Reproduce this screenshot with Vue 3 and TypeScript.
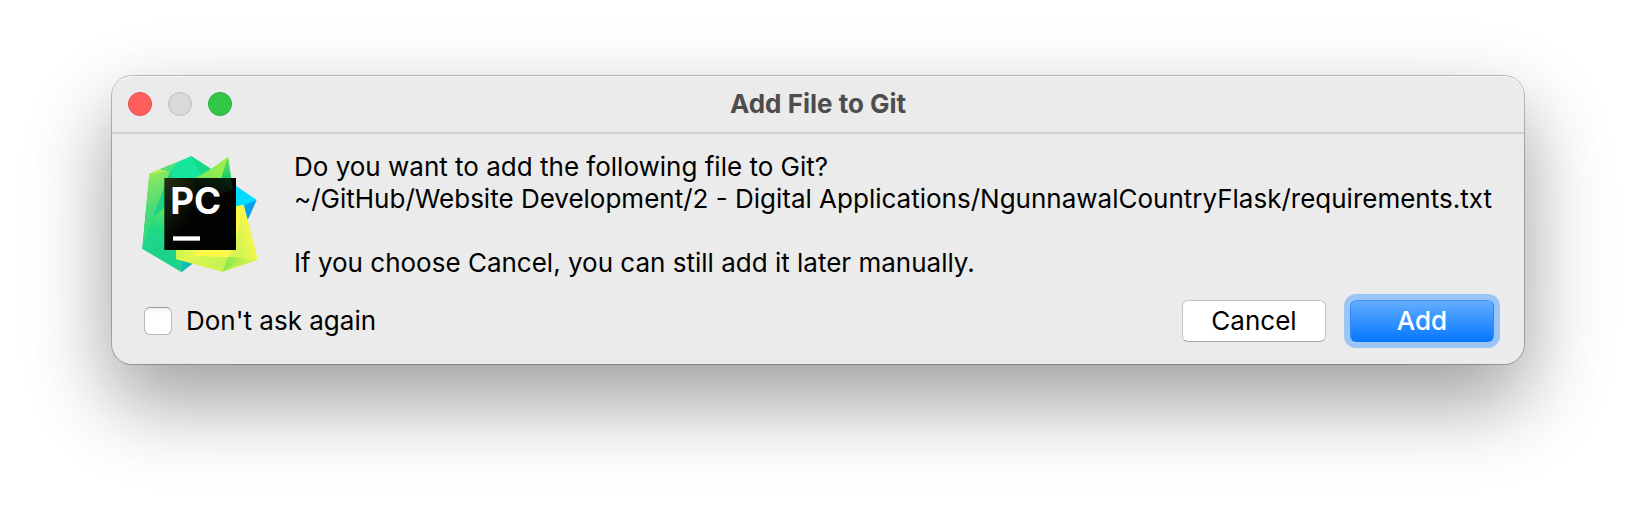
<script setup lang="ts">
import { ref } from 'vue'

const dontAsk = ref<boolean>(false)
const filePath = '~/GitHub/Website Development/2 - Digital Applications/NgunnawalCountryFlask/requirements.txt'
</script>

<template>
  <main class="desktop">
    <section class="dialog" role="dialog" aria-labelledby="dialog-title">
      <header class="titlebar">
        <div class="lights">
          <button class="light close" type="button" aria-label="Close"></button>
          <button class="light minimise" type="button" aria-label="Minimise" disabled></button>
          <button class="light zoom" type="button" aria-label="Zoom"></button>
        </div>
        <h1 id="dialog-title" class="title">Add File to Git</h1>
      </header>

      <div class="content">
        <svg class="logo" viewBox="36 30 351 351" aria-hidden="true">
          <defs>
            <linearGradient id="leaf" x1="60" y1="90" x2="220" y2="320" gradientUnits="userSpaceOnUse">
              <stop offset="0" stop-color="#5fdc63" />
              <stop offset="0.35" stop-color="#25d97b" />
              <stop offset="1" stop-color="#20d78c" />
            </linearGradient>
            <linearGradient id="side" x1="60" y1="90" x2="100" y2="190" gradientUnits="userSpaceOnUse">
              <stop offset="0" stop-color="#8fe960" />
              <stop offset="1" stop-color="#35d77c" />
            </linearGradient>
            <linearGradient id="edge" x1="60" y1="86" x2="45" y2="311" gradientUnits="userSpaceOnUse">
              <stop offset="0" stop-color="#86e764" />
              <stop offset="1" stop-color="#2fd886" />
            </linearGradient>
            <linearGradient id="flap" x1="103" y1="190" x2="60" y2="290" gradientUnits="userSpaceOnUse">
              <stop offset="0" stop-color="#5ee25f" />
              <stop offset="0.6" stop-color="#20d884" />
              <stop offset="1" stop-color="#20d58c" />
            </linearGradient>
            <linearGradient id="lime" x1="200" y1="90" x2="300" y2="60" gradientUnits="userSpaceOnUse">
              <stop offset="0" stop-color="#76e957" />
              <stop offset="1" stop-color="#a4ef4b" />
            </linearGradient>
            <linearGradient id="fold" x1="294" y1="35" x2="290" y2="100" gradientUnits="userSpaceOnUse">
              <stop offset="0" stop-color="#6fe352" />
              <stop offset="1" stop-color="#12cf70" />
            </linearGradient>
            <linearGradient id="sun" x1="140" y1="325" x2="330" y2="240" gradientUnits="userSpaceOnUse">
              <stop offset="0" stop-color="#cff650" />
              <stop offset="0.4" stop-color="#f2fa49" />
              <stop offset="1" stop-color="#fbf845" />
            </linearGradient>
            <linearGradient id="sunside" x1="320" y1="270" x2="375" y2="255" gradientUnits="userSpaceOnUse">
              <stop offset="0" stop-color="#d6f552" />
              <stop offset="1" stop-color="#fbf945" />
            </linearGradient>
            <linearGradient id="hem" x1="140" y1="340" x2="290" y2="345" gradientUnits="userSpaceOnUse">
              <stop offset="0" stop-color="#e6f84c" />
              <stop offset="1" stop-color="#c3f252" />
            </linearGradient>
            <linearGradient id="hemend" x1="285" y1="345" x2="380" y2="345" gradientUnits="userSpaceOnUse">
              <stop offset="0" stop-color="#86e84f" />
              <stop offset="1" stop-color="#e8f74b" />
            </linearGradient>
            <linearGradient id="tile" x1="103" y1="115" x2="200" y2="190" gradientUnits="userSpaceOnUse">
              <stop offset="0" stop-color="#223010" />
              <stop offset="0.5" stop-color="#12190a" />
              <stop offset="1" stop-color="#030402" />
            </linearGradient>
            <linearGradient id="glint" x1="300" y1="99" x2="270" y2="180" gradientUnits="userSpaceOnUse">
              <stop offset="0" stop-color="#0a2413" />
              <stop offset="1" stop-color="#030402" />
            </linearGradient>
          </defs>
          <path fill="url(#leaf)" d="M58 86 184 34 244 73 300 220 190 351 155 381 37 311Z" />
          <path fill="url(#side)" d="M58 86 120 79 112 180 68 220 37 311Z" />
          <path fill="url(#edge)" d="M58 86 103 130 68 220 37 311Z" opacity="0.4" />
          <path fill="#1fd382" d="M120 79 68 218 112 180 130 100Z" />
          <path fill="#b6f04b" d="M58 86 90 72 120 79Z" />
          <path fill="#4ee179" d="M90 72 145 50 120 81Z" />
          <path fill="#16e59b" d="M145 50 184 34 244 73 200 100 130 100 119 81Z" />
          <path fill="#17d989" d="M184 34 244 73 214 92Z" />
          <path fill="url(#flap)" d="M68 220 110 182 110 311 37 311Z" />
          <path fill="#1bd389" d="M37 311 103 303 138 315 155 381Z" />
          <path fill="#16b9b6" d="M155 381 157 343 194 352Z" />
          <path fill="#00dcff" d="M315 121 380 165 340 186 310 200Z" />
          <path fill="#059fee" d="M380 165 353 226 340 182Z" />
          <path fill="url(#lime)" d="M175 110 244 71 294 35 308 140 200 150Z" />
          <path fill="url(#fold)" d="M294 35 270 110 310 145Z" />
          <path fill="url(#sun)" d="M138 315 317 184 341 179 383 344 277 380 138 342Z" />
          <path fill="url(#sunside)" d="M341 179 383 344 295 337 316 280 317 250Z" />
          <path fill="#fdf747" d="M317 187 341 179 330 230 316 290 295 337 190 335Z" />
          <path fill="url(#hem)" d="M138 342 215 333 295 337 277 380Z" />
          <path fill="url(#hemend)" d="M277 380 295 335 383 344Z" />
          <path fill="#c2f24f" d="M277 380 320 356 383 344Z" />
          <rect x="103" y="99" width="215" height="216" fill="url(#tile)" />
          <path fill="url(#glint)" d="M180 99H302L310 135 232 160Z" />
          <text class="monogram" x="121" y="207">PC</text>
          <path fill="#fff" d="M129 274H210V287H129Z" />
        </svg>
        <div class="message">
          <p>Do you want to add the following file to Git?</p>
          <p>{{ filePath }}</p>
          <p class="note">If you choose Cancel, you can still add it later manually.</p>
        </div>
      </div>

      <footer class="actions">
        <label class="option">
          <input v-model="dontAsk" class="tick" type="checkbox" />
          <span>Don't ask again</span>
        </label>
        <div class="buttons">
          <button class="button" type="button">Cancel</button>
          <button class="button primary" type="button">Add</button>
        </div>
      </footer>
    </section>
  </main>
</template>

<style>
body {
  margin: 0;
  background: #fff;
}
</style>

<style scoped>
.desktop {
  box-sizing: border-box;
  min-height: 100vh;
  padding: 76px 112px;
  overflow: hidden;
  font-family: Inter, "Liberation Sans", sans-serif;
  font-size: 26px;
  line-height: 32px;
  color: #000;
}
.dialog {
  border-radius: 20px;
  background: #ebebeb;
  box-shadow:
    inset 0 1px 0 #f8f8f8,
    0 0 0 1px rgba(0, 0, 0, 0.24),
    0 36px 72px rgba(0, 0, 0, 0.26),
    0 36px 100px rgba(0, 0, 0, 0.16);
}
.titlebar {
  display: grid;
  grid-template-columns: 1fr auto 1fr;
  align-items: center;
  height: 56px;
  padding: 0 16px;
  border-bottom: 2px solid #d0d0d0;
}
.lights {
  display: flex;
  gap: 16px;
}
.light {
  width: 24px;
  height: 24px;
  padding: 0;
  border: 1px solid;
  border-radius: 50%;
}
.close {
  border-color: #e24b48;
  background: #fe5f5b;
}
.minimise {
  border-color: #bdbdbd;
  background: #dadada;
}
.zoom {
  border-color: #2aad38;
  background: #33c748;
}
.title {
  margin: 0;
  font-size: 26px;
  font-weight: 700;
  color: #4d4d4d;
}
.content {
  display: flex;
  gap: 35px;
  padding: 17px 24px 0 30px;
}
.logo {
  flex: none;
  width: 117px;
  height: 117px;
  margin-top: 4px;
}
.monogram {
  font-family: Inter, "Liberation Sans", sans-serif;
  font-size: 110px;
  font-weight: 700;
  fill: #fff;
}
.message {
  white-space: nowrap;
}
.message p {
  margin: 0;
}
.message .note {
  margin-top: 32px;
}
.actions {
  display: flex;
  align-items: center;
  justify-content: space-between;
  padding: 21px 30px 22px 32px;
}
.option {
  display: flex;
  align-items: center;
  gap: 14px;
}
.tick {
  width: 28px;
  height: 28px;
  margin: 0;
  appearance: none;
  border: 1px solid #b8b8b8;
  border-top-color: #9c9c9c;
  border-radius: 6px;
  background: linear-gradient(#f2f2f2, #fff 6px);
}
.tick:checked {
  background: #0a7aff;
}
.buttons {
  display: flex;
  gap: 24px;
}
.button {
  width: 144px;
  height: 42px;
  padding: 0;
  border: 1px solid #c3c3c3;
  border-bottom-color: #a8a8a8;
  border-radius: 6px;
  background: #fff;
  font: inherit;
  color: #000;
}
.primary {
  border-color: #3f97fb #2b8afc #0a78fb;
  background: linear-gradient(#64aeff, #0a7aff 95%);
  box-shadow: 0 0 0 6px #9bc5f4;
  font-weight: 500;
  color: #fff;
}
</style>
